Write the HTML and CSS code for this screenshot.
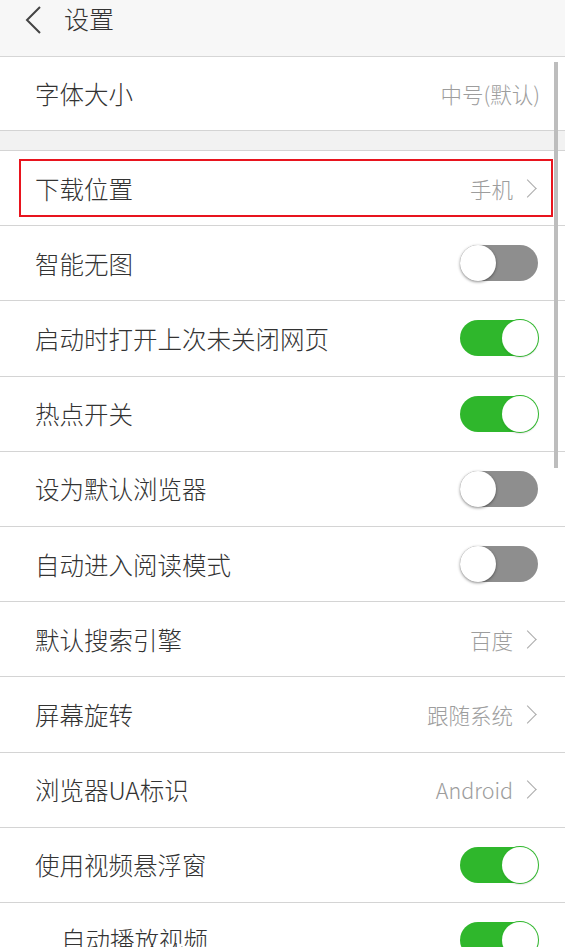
FILE: index.html
```html
<!DOCTYPE html>
<html lang="zh-CN">

<head>
    <meta charset="UTF-8">
    <meta name="viewport" content="width=device-width, initial-scale=1.0">
    <title>设置</title>
    <link rel="stylesheet" href="styles.css">
</head>

<body>
    <header class="top-bar">
        <svg class="back-icon" width="20" height="30" viewBox="0 0 20 30">
            <polyline points="17,2 4,15 17,28" fill="none" stroke="#444" stroke-width="2" />
        </svg>
        <h1>设置</h1>
    </header>

    <section class="group">
        <div class="row">
            <span class="label">字体大小</span>
            <span class="value">中号(默认)</span>
        </div>
    </section>

    <div class="spacer"></div>

    <section class="group">
        <div class="row highlight">
            <span class="label">下载位置</span>
            <span class="value">手机<i class="chevron"></i></span>
        </div>
        <div class="row">
            <span class="label">智能无图</span>
            <span class="switch"></span>
        </div>
        <div class="row">
            <span class="label">启动时打开上次未关闭网页</span>
            <span class="switch on"></span>
        </div>
        <div class="row">
            <span class="label">热点开关</span>
            <span class="switch on"></span>
        </div>
        <div class="row">
            <span class="label">设为默认浏览器</span>
            <span class="switch"></span>
        </div>
        <div class="row">
            <span class="label">自动进入阅读模式</span>
            <span class="switch"></span>
        </div>
        <div class="row">
            <span class="label">默认搜索引擎</span>
            <span class="value">百度<i class="chevron"></i></span>
        </div>
        <div class="row">
            <span class="label">屏幕旋转</span>
            <span class="value">跟随系统<i class="chevron"></i></span>
        </div>
        <div class="row">
            <span class="label">浏览器UA标识</span>
            <span class="value">Android<i class="chevron"></i></span>
        </div>
        <div class="row">
            <span class="label">使用视频悬浮窗</span>
            <span class="switch on"></span>
        </div>
        <div class="row sub">
            <span class="label">自动播放视频</span>
            <span class="switch on"></span>
        </div>
    </section>

    <div class="scrollbar"></div>
</body>

</html>
```

FILE: styles.css
```css
body {
    margin: 0;
    padding: 0;
    background-color: #fff;
    font-family: 'Noto Sans CJK SC', 'Noto Sans', sans-serif;
    font-weight: 300;
    color: #333;
    overflow: hidden;
    height: 947px;
}

/* top bar */
.top-bar {
    background-color: #f7f7f7;
    border-bottom: 1px solid #d6d6d6;
    display: flex;
    align-items: flex-start;
    padding: 3px 0 0 23px;
    height: 53px;
}

.back-icon {
    margin-top: 2px;
}

.top-bar h1 {
    margin: 0 0 0 21px;
    font-size: 25px;
    font-weight: 300;
    line-height: 30px;
    color: #333;
}

/* rows */
.row {
    position: relative;
    display: flex;
    align-items: center;
    justify-content: space-between;
    height: 74.2px;
    padding: 0 27px 0 35px;
    border-bottom: 1px solid #d4d4d4;
}

.group:first-of-type .row {
    height: 73px;
}

.label {
    font-size: 24.5px;
    color: #333;
    white-space: nowrap;
}

.value {
    display: flex;
    align-items: center;
    font-size: 21.5px;
    color: #9d9d9d;
}

.chevron {
    display: inline-block;
    width: 12px;
    height: 12px;
    border-top: 1.5px solid #aaa;
    border-right: 1.5px solid #aaa;
    transform: rotate(45deg);
    margin: 0 4px 0 8px;
}

.group:first-of-type .value {
    margin-right: -2px;
}

.spacer {
    height: 19px;
    background-color: #f2f2f2;
    border-bottom: 1px solid #d4d4d4;
}

.sub {
    padding-left: 61px;
}

/* switches */
.switch {
    position: relative;
    flex-shrink: 0;
    width: 78px;
    height: 36px;
    border-radius: 18px;
    background-color: #8e8e8e;
}

.switch::after {
    content: "";
    position: absolute;
    top: 0;
    left: 0;
    width: 36px;
    height: 36px;
    border-radius: 50%;
    background-color: #fff;
    box-shadow: 0 1px 3px rgba(0, 0, 0, 0.45);
}

.switch.on {
    background-color: #2fb72c;
}

.switch.on::after {
    left: auto;
    right: 0;
    box-shadow: 0 0 0 1px #2fb72c, 0 1px 2px rgba(0, 0, 0, 0.3);
}

/* red annotation box */
.highlight::before {
    content: "";
    position: absolute;
    left: 19px;
    right: 12px;
    top: 8px;
    bottom: 8px;
    border: 2px solid #e8141e;
}

.scrollbar {
    position: absolute;
    top: 62px;
    left: 554px;
    width: 4px;
    height: 406px;
    background-color: #bdbdbd;
}
```
